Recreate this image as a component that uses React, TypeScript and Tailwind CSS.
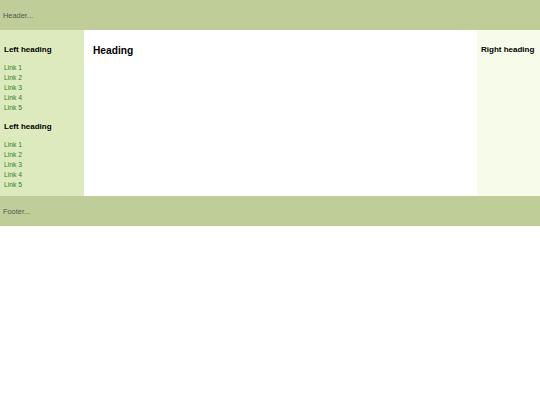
import React from 'react';

const links = ['Link 1', 'Link 2', 'Link 3', 'Link 4', 'Link 5'];

const LinkGroup: React.FC<{ title: string }> = ({ title }) => (
  <div>
    <h3 className="text-[8px] leading-[10px] font-bold text-black">{title}</h3>
    <ul className="mt-[8px]">
      {links.map((l) => (
        <li key={l} className="text-[6.8px] leading-[10px] text-[#2f7f2a]">
          {l}
        </li>
      ))}
    </ul>
  </div>
);

const App: React.FC = () => {
  return (
    <div className="w-[540px] h-[405px] bg-white font-['Liberation_Sans',Arial,sans-serif]">
      {/* header */}
      <div className="h-[30px] bg-[#bfce99] flex items-center pl-[3px] pt-[1px] text-[7.4px] text-[#555]">
        Header...
      </div>

      <div className="flex h-[166px]">
        {/* left nav */}
        <div className="w-[84px] bg-[#ddeabe] pt-[15px] px-[4px] flex flex-col gap-[9px]">
          <LinkGroup title="Left heading" />
          <LinkGroup title="Left heading" />
        </div>

        {/* main */}
        <div className="flex-1 bg-white pt-[15px] pl-[9px]">
          <h2 className="text-[10.2px] leading-[12px] font-bold text-black">Heading</h2>
        </div>

        {/* right */}
        <div className="w-[63px] bg-[#f7fbea] pt-[15px] pl-[4px]">
          <h3 className="text-[8px] leading-[10px] font-bold text-black">Right heading</h3>
        </div>
      </div>

      {/* footer */}
      <div className="h-[30px] bg-[#bfce99] flex items-center pl-[3px] pt-[1px] text-[7.4px] text-[#555]">
        Footer...
      </div>
    </div>
  );
};

export default App;
